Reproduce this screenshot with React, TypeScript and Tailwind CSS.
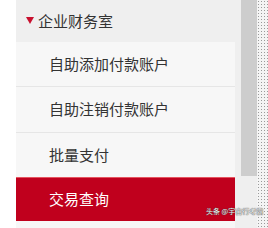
import React from "react";

export default function App() {
  const font = { fontFamily: '"Noto Sans CJK SC", "Noto Sans", sans-serif' };
  return (
    <div className="relative flex h-[228px] w-[268px] overflow-hidden bg-white" style={font}>
      <div className="w-[16px] shrink-0 bg-white" />
      <div className="flex w-[225px] shrink-0 flex-col bg-[#efefef]">
        <div className="flex h-[42px] shrink-0 items-center pl-[10px] text-[15px] text-[#333]">
          <svg width="8" height="7" viewBox="0 0 8 7" className="mr-[4px] mt-[-1px]">
            <polygon points="0,0 8,0 4,7" fill="#c8102e" />
          </svg>
          <span>企业财务室</span>
        </div>
        <div className="flex w-[219px] flex-1 flex-col bg-[#f7f7f7]">
          <div className="flex h-[45px] shrink-0 items-center border-b border-[#e6e6e6] pl-[33px] text-[15px] text-[#333]">
            自助添加付款账户
          </div>
          <div className="flex h-[46px] shrink-0 items-center border-b border-[#e6e6e6] pl-[33px] text-[15px] text-[#333]">
            自助注销付款账户
          </div>
          <div className="flex h-[44px] shrink-0 items-center pl-[33px] text-[15px] text-[#333]">
            批量支付
          </div>
          <div className="flex h-[44px] shrink-0 items-center border-t border-[#e5545f] bg-[#c0001d] pl-[33px] text-[15px] text-white">
            交易查询
          </div>
        </div>
      </div>
      <div className="flex w-[16px] shrink-0 flex-col bg-[#efefef]">
        <div className="h-[176px] bg-[#cdcdcd]" />
      </div>
      <div className="w-[11px] shrink-0 bg-[#f4f4f4] bg-[radial-gradient(circle,#9a9a9a_0.7px,transparent_0.9px)] bg-[length:3px_3px]" />
      <div className="absolute left-[206px] top-[208px] z-10 whitespace-nowrap text-[7px] leading-none text-[#f2f2f2] [text-shadow:0_0_1px_#444,0_0_1px_#444]">
        头条 @宇宙行考霸
      </div>
    </div>
  );
}
